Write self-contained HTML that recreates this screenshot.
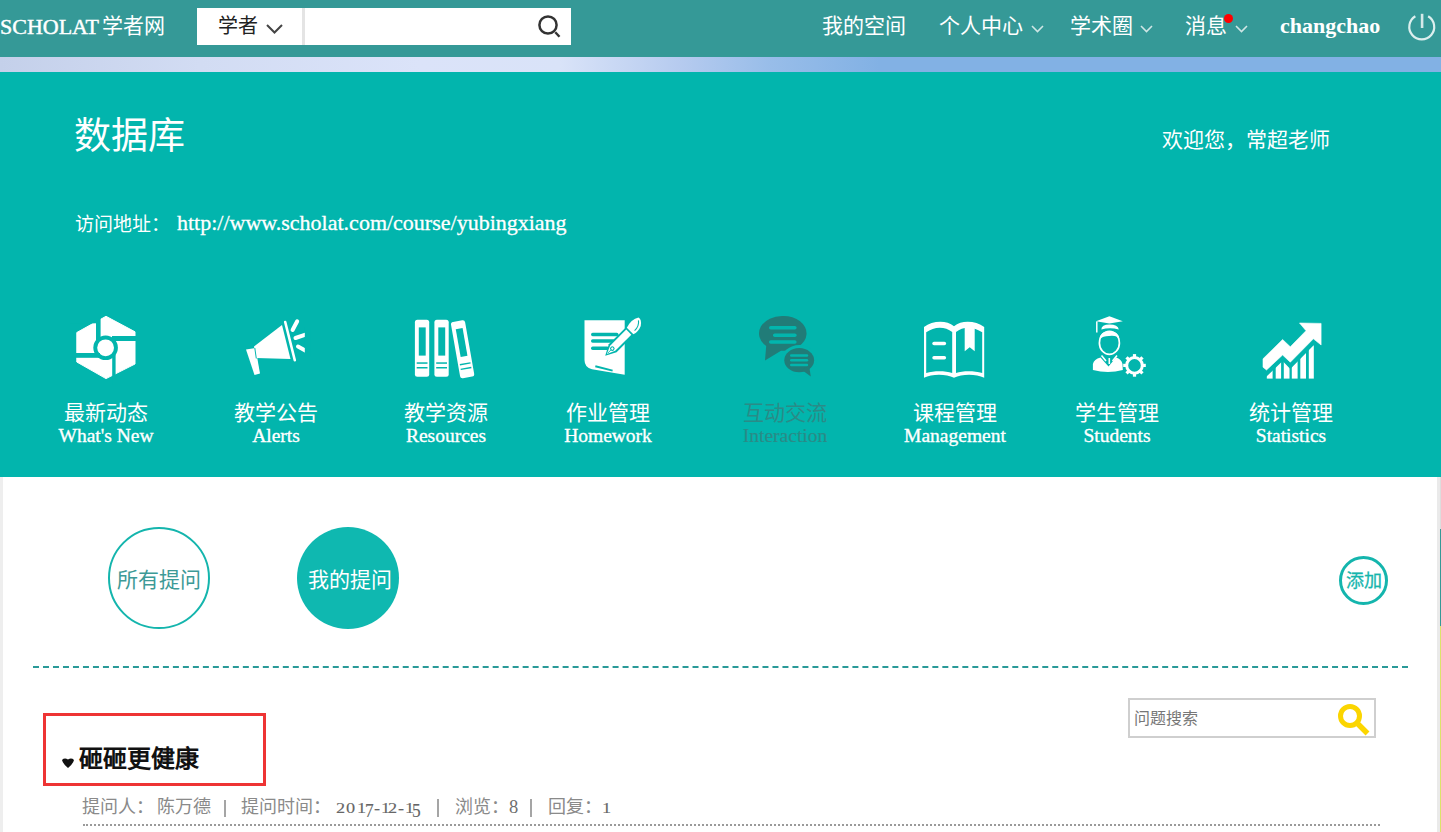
<!DOCTYPE html>
<html lang="zh-CN">
<head>
<meta charset="utf-8">
<style>
*{margin:0;padding:0;box-sizing:border-box}
html,body{width:1441px;height:832px;overflow:hidden;background:#fff;font-family:"Liberation Serif",serif}
.abs{position:absolute}
.nav{position:absolute;left:0;top:0;width:1441px;height:57px;background:#359997}
.strip{position:absolute;left:0;top:57px;width:1441px;height:15px;
background:linear-gradient(to right,#c4d0ea 0px,#d2dcf3 200px,#dbe3f9 420px,#d9e3f8 560px,#b6cbef 680px,#98bde9 770px,#82b1e4 880px,#82b1e4 1441px)}
.hero{position:absolute;left:0;top:72px;width:1441px;height:405px;background:#02b5ad}
.w{color:#fff;white-space:nowrap}
.sans{font-family:"Liberation Sans",sans-serif}
.ni{position:absolute;top:13px;font-family:"Liberation Sans",sans-serif;font-size:21px;line-height:26px;color:#fff;white-space:nowrap}
.lbl{position:absolute;top:401px;width:160px;text-align:center;color:#fff;white-space:nowrap}
.lbl .cn{font-family:"Liberation Sans",sans-serif;font-size:21px;line-height:26px;display:block;margin-top:-1px}
.lbl .en{font-family:"Liberation Serif",serif;font-size:19.5px;line-height:20px;display:block;margin-top:0px;-webkit-text-stroke:0.35px currentColor}
svg{position:absolute;overflow:visible}
.dg{font-family:"Liberation Serif",serif;font-size:15.5px;line-height:20px;color:#666;-webkit-text-stroke:0.1px #666;transform:scaleX(1.18);transform-origin:0 0}
.dg.tl{transform:scale(1.12,1.24)}
</style>
</head>
<body>
<!-- top nav -->
<div class="nav"></div>
<div class="abs w" style="left:0;top:13px;font-size:22px;line-height:28px;-webkit-text-stroke:0.45px #fff">SCHOLAT</div><div class="abs w sans" style="left:102px;top:12px;font-size:21px;line-height:28px">学者网</div>
<div class="abs" style="left:197px;top:8px;width:374px;height:37px;background:#fff"></div>
<div class="abs" style="left:302px;top:8px;width:3px;height:37px;background:#e4e4e4"></div>
<div class="abs sans" style="left:218px;top:14px;font-size:20px;line-height:24px;color:#222">学者</div>
<svg style="left:266px;top:24px" width="17" height="10" viewBox="0 0 17 10"><path d="M1 1 L8.5 8.5 L16 1" fill="none" stroke="#444" stroke-width="2"/></svg>
<svg style="left:537px;top:14px" width="26" height="26" viewBox="0 0 26 26"><circle cx="11" cy="11" r="8.6" fill="none" stroke="#333" stroke-width="2.5"/><path d="M18.3 18.3 L22.5 22.8" stroke="#333" stroke-width="2.4"/></svg>

<div class="ni" style="left:822px">我的空间</div>
<div class="ni" style="left:939px">个人中心</div>
<svg style="left:1031px;top:25px" width="13" height="8" viewBox="0 0 13 8"><path d="M1 1 L6.5 6.5 L12 1" fill="none" stroke="#cfe6e5" stroke-width="1.6"/></svg>
<div class="ni" style="left:1070px">学术圈</div>
<svg style="left:1140px;top:25px" width="13" height="8" viewBox="0 0 13 8"><path d="M1 1 L6.5 6.5 L12 1" fill="none" stroke="#cfe6e5" stroke-width="1.6"/></svg>
<div class="ni" style="left:1185px">消息</div>
<div class="abs" style="left:1224px;top:14px;width:9px;height:9px;border-radius:50%;background:#f00"></div>
<svg style="left:1235px;top:25px" width="13" height="8" viewBox="0 0 13 8"><path d="M1 1 L6.5 6.5 L12 1" fill="none" stroke="#cfe6e5" stroke-width="1.6"/></svg>
<div class="abs w" style="left:1280px;top:12px;font-size:22px;line-height:28px;font-weight:bold">changchao</div>
<svg style="left:1408px;top:12px" width="30" height="30" viewBox="0 0 30 30"><path d="M7.35 4.2 A12.45 12.45 0 1 0 20.15 4.2" fill="none" stroke="#dcefee" stroke-width="2.2"/><path d="M14.1 1.8 L14.1 16" stroke="#d5e9e9" stroke-width="2.6"/></svg>

<div class="strip"></div>

<!-- hero -->
<div class="hero"></div>
<div class="abs w sans" style="left:74px;top:115px;font-size:37px;line-height:44px">数据库</div>
<div class="abs w sans" style="left:1162px;top:127px;font-size:21px;line-height:26px">欢迎您，常超老师</div>
<div class="abs w sans" style="left:75px;top:212px;font-size:19px;line-height:26px;font-weight:350">访问地址：</div><div class="abs w" style="left:177px;top:209px;font-size:22px;line-height:28px;-webkit-text-stroke:0.3px #fff">http://www.scholat.com/course/yubingxiang</div>

<!-- icons -->
<!-- icon1 hexagon (origin 70,310) -->
<svg style="left:70px;top:310px" width="70" height="75" viewBox="0 0 70 75">
<polygon points="36,6.3 65,21.8 65,54 36,68.6 6.8,52 6.8,22.5" fill="#fff" stroke="#fff" stroke-width="1" stroke-linejoin="round"/>
<circle cx="35.6" cy="37.8" r="12.3" fill="#02b5ad"/>
<circle cx="35.6" cy="37.8" r="8.4" fill="#fff"/>
<rect x="26" y="0" width="4.6" height="30" fill="#02b5ad"/>
<rect x="42" y="26" width="30" height="5" fill="#02b5ad"/>
<rect x="42.2" y="45" width="3.4" height="30" fill="#02b5ad"/>
<rect x="0" y="43" width="30" height="4.8" fill="#02b5ad"/>
<rect x="0" y="0" width="27" height="13.3" fill="#02b5ad"/>
<rect x="44" y="66" width="30" height="9" fill="#02b5ad"/>
</svg>
<!-- icon2 megaphone (origin 240,312) -->
<svg style="left:240px;top:312px" width="70" height="70" viewBox="0 0 70 70">
<polygon points="14,34.5 42,13 50.5,47 16,46" fill="#fff"/>
<path d="M45.2 10 L54.8 48.3" stroke="#fff" stroke-width="2.6" stroke-linecap="round"/>
<polygon points="6,37.5 15.5,36 20,61.5 14.5,63" fill="#fff"/>
<path d="M52.6 18 L57.2 9.3" stroke="#fff" stroke-width="4" stroke-linecap="round"/>
<path d="M55.5 26 L67 22.2" stroke="#fff" stroke-width="4" stroke-linecap="round"/>
<path d="M58 34.5 L67 39.5" stroke="#fff" stroke-width="4" stroke-linecap="round"/>
<rect x="64.8" y="15" width="6" height="30" fill="#02b5ad"/>
<path d="M14.8 36 L16.3 46.5" stroke="#02b5ad" stroke-width="1"/>
</svg>
<!-- icon3 books (origin 408,312) -->
<svg style="left:408px;top:311px" width="72" height="72" viewBox="0 0 72 72">
<g id="bk">
<rect x="6.9" y="8.7" width="14.3" height="57.1" rx="2.5" fill="#fff"/>
<rect x="10.8" y="16.4" width="6.9" height="28.2" fill="#02b5ad"/>
<rect x="8.7" y="51.3" width="10.8" height="1.5" fill="#02b5ad"/>
<rect x="8.7" y="56" width="10.8" height="1.5" fill="#02b5ad"/>
</g>
<use href="#bk" x="19.5"/>
<use href="#bk" transform="translate(40.5 1) rotate(-10 14 37)"/>
</svg>
<!-- icon4 homework (origin 578,312) -->
<svg style="left:578px;top:312px" width="72" height="72" viewBox="0 0 72 72">
<path d="M6.5 8.2 L46.7 8.2 L46.7 62.7 L14 57.3 Q6.5 55.5 6.5 48 Z" fill="#fff"/>
<rect x="13" y="20.8" width="27.5" height="3.4" rx="1.7" fill="#02b5ad"/>
<rect x="13" y="27.3" width="24" height="3.4" rx="1.7" fill="#02b5ad"/>
<rect x="13" y="34.6" width="18" height="3.4" rx="1.7" fill="#02b5ad"/>
<path d="M17.3 54.3 L34.6 58.6" stroke="#02b5ad" stroke-width="2"/>
<g transform="translate(28.3 42.6) rotate(-45)">
<path d="M-1.5 0 L9 -5.5 L33 -5.5 L33 5.5 L9 5.5 Z" fill="#02b5ad"/>
<path d="M0.8 0 L9 -3.6 L31.8 -3.6 L31.8 3.6 L9 3.6 Z" fill="#fff"/>
<circle cx="8.5" cy="0" r="1.7" fill="none" stroke="#02b5ad" stroke-width="1.1"/>
<path d="M2 0 L7 0" stroke="#02b5ad" stroke-width="0.8"/>
<path d="M33.5 -4.5 Q43 -7.5 49 -3.5 Q50 0.5 44.5 4.2 Q38.5 6.8 33.5 4.8 Z" fill="#fff"/>
<path d="M37 3 Q43.5 3.2 47 -1.5" fill="none" stroke="#02b5ad" stroke-width="1.1"/>
</g>
</svg>
<!-- icon5 interaction (origin 752,310) -->
<svg style="left:752px;top:310px" width="72" height="72" viewBox="0 0 72 72">
<path fill="#217c78" d="M31.2 6 A23.1 17.4 0 1 1 29 40.7 L13 50.6 L14.2 36 A23.1 17.4 0 0 1 31.2 6 Z"/>
<g fill="#02b5ad">
<rect x="17" y="16" width="27.6" height="3.5" rx="1.7"/>
<rect x="21" y="23.4" width="23.6" height="3.5" rx="1.7"/>
<rect x="17" y="30.3" width="27.6" height="3.5" rx="1.7"/>
<ellipse cx="47.2" cy="50.2" rx="17.9" ry="15.1"/>
</g>
<g fill="#217c78">
<ellipse cx="47.2" cy="50.2" rx="14.9" ry="12.1"/>
<polygon points="50,60 58.8,66.6 57,55"/>
</g>
<g fill="#02b5ad">
<rect x="38" y="44.2" width="18.2" height="2.5" rx="1.2"/>
<rect x="38" y="49" width="18.2" height="2.5" rx="1.2"/>
<rect x="38" y="53.8" width="18.2" height="2.5" rx="1.2"/>
</g>
</svg>
<!-- icon6 open book (origin 918,314) -->
<svg style="left:918px;top:314px" width="72" height="72" viewBox="0 0 72 72">
<path fill="#fff" fill-rule="evenodd" d="M6 13 C14 7 28 5.5 36 12.3 C44 5.5 58 7 66.2 13 L66.2 63.8 C58 59.8 44 59.8 36 63.8 C28 59.8 14 59.8 6 63.8 Z M8.2 18.3 C16 12.3 27 12 34.2 18 L34.2 59 C27 56.5 16 56.5 8.2 59 Z M38 18 C45 12 56 12.3 64.2 18.3 L64.2 59 C56 56.5 45 56.5 38 59 Z"/>
<rect x="14.3" y="27.8" width="13.8" height="3.4" rx="1.7" fill="#fff"/>
<rect x="14.3" y="42" width="13.8" height="3.4" rx="1.7" fill="#fff"/>
<polygon points="46.7,12 56.7,12 56.7,37.2 51.7,33.3 46.7,37.2" fill="#fff"/>
</svg>
<!-- icon7 student (origin 1086,310) -->
<svg style="left:1086px;top:310px" width="72" height="72" viewBox="0 0 72 72">
<polygon points="10,11.2 23.4,6.3 36.8,11.2 23.4,13.5" fill="#fff"/>
<path d="M15.3 19.5 Q15.5 14.5 23.5 14.5 Q32 14.5 32.8 19.5 Q24 17 15.3 19.5 Z" fill="#fff"/>
<path d="M10.8 11.5 L10.8 22.5" stroke="#fff" stroke-width="1.5"/>
<ellipse cx="23.4" cy="32.9" rx="10" ry="11.5" fill="none" stroke="#fff" stroke-width="1.7"/>
<path d="M13.5 29 Q14 21.5 23.4 21.3 Q33 21.5 33.3 29 Q31 25 23 26 Q17 26 13.5 29 Z" fill="#fff"/>
<path d="M6.9 54 Q8 49 14.5 47.5 L22.5 56.5 L30 47.5 Q35.5 49 36.5 54 L36.8 60 Q22 64 6.9 60 Z" fill="#fff"/>
<path d="M15.5 45.5 L20 51 M31 45.5 L26.5 51 M23.3 48 L23.3 54" stroke="#fff" stroke-width="1.6"/>
<g transform="translate(48.5 55.4)">
<circle r="7.8" fill="none" stroke="#fff" stroke-width="3"/>
<g fill="#fff">
<rect x="-1.6" y="-11.3" width="3.2" height="4" transform="rotate(0)"/>
<rect x="-1.6" y="-11.3" width="3.2" height="4" transform="rotate(45)"/>
<rect x="-1.6" y="-11.3" width="3.2" height="4" transform="rotate(90)"/>
<rect x="-1.6" y="-11.3" width="3.2" height="4" transform="rotate(135)"/>
<rect x="-1.6" y="-11.3" width="3.2" height="4" transform="rotate(180)"/>
<rect x="-1.6" y="-11.3" width="3.2" height="4" transform="rotate(225)"/>
<rect x="-1.6" y="-11.3" width="3.2" height="4" transform="rotate(270)"/>
<rect x="-1.6" y="-11.3" width="3.2" height="4" transform="rotate(315)"/>
</g>
</g>
</svg>
<!-- icon8 stats (origin 1230,310) -->
<svg style="left:1230px;top:310px" width="100" height="72" viewBox="0 0 100 72">
<polygon points="33,48.8 52.6,29.5 60.3,36.8 76,20.7 69.5,13 91.1,13.4 91.1,35 83.4,28.8 60.3,52.2 52.6,45 36.5,60 33,57.2" fill="#fff" stroke="#fff" stroke-width="0.6" stroke-linejoin="round"/>
<clipPath id="bc"><polygon points="36.5,66.5 52.6,51 60.3,59 83.4,35.5 84,35.5 84,68.8 30,68.8"/></clipPath>
<g clip-path="url(#bc)" fill="#fff">
<rect x="36.8" y="30" width="5.8" height="38.8"/>
<rect x="45.7" y="30" width="5.4" height="38.8"/>
<rect x="53.8" y="30" width="5.7" height="38.8"/>
<rect x="61.8" y="30" width="5.8" height="38.8"/>
<rect x="70.3" y="30" width="5.7" height="38.8"/>
<rect x="78.8" y="30" width="5" height="38.8"/>
</g>
</svg>


<div class="lbl" style="left:26px"><span class="cn">最新动态</span><span class="en">What's New</span></div>
<div class="lbl" style="left:196px"><span class="cn">教学公告</span><span class="en">Alerts</span></div>
<div class="lbl" style="left:366px"><span class="cn">教学资源</span><span class="en">Resources</span></div>
<div class="lbl" style="left:528px"><span class="cn">作业管理</span><span class="en">Homework</span></div>
<div class="lbl" style="left:705px;color:#2a8b87"><span class="cn" style="font-weight:350">互动交流</span><span class="en" style="-webkit-text-stroke:0.15px currentColor">Interaction</span></div>
<div class="lbl" style="left:875px"><span class="cn">课程管理</span><span class="en">Management</span></div>
<div class="lbl" style="left:1037px"><span class="cn">学生管理</span><span class="en">Students</span></div>
<div class="lbl" style="left:1211px"><span class="cn">统计管理</span><span class="en">Statistics</span></div>

<!-- lower -->
<div class="abs" style="left:0;top:477px;width:3px;height:355px;background:#eee"></div>
<div class="abs" style="left:1437px;top:477px;width:3px;height:355px;background:#eaeaea"></div>
<div class="abs" style="left:1440px;top:477px;width:1px;height:52px;background:#ddd"></div>
<div class="abs" style="left:1440px;top:529px;width:1px;height:97px;background:#359997"></div>
<div class="abs" style="left:1440px;top:626px;width:1px;height:206px;background:#dde36a"></div>

<div class="abs" style="left:108px;top:527px;width:102px;height:102px;border-radius:50%;border:2px solid #14b5ad"></div>
<div class="abs sans" style="left:108px;top:566px;width:102px;text-align:center;font-size:21px;line-height:28px;color:#3d9a97;font-weight:350">所有提问</div>
<div class="abs" style="left:297px;top:527px;width:102px;height:102px;border-radius:50%;background:#0fb8b0"></div>
<div class="abs sans" style="left:297px;top:566px;width:106px;text-align:center;font-size:21px;line-height:28px;color:#fff;font-weight:350">我的提问</div>
<div class="abs" style="left:1339px;top:556px;width:49px;height:49px;border-radius:50%;border:3px solid #14b5ad"></div>
<div class="abs sans" style="left:1339px;top:568px;width:49px;text-align:center;font-size:18px;line-height:26px;color:#14b5ad;-webkit-text-stroke:0.3px #14b5ad">添加</div>

<div class="abs" style="left:33px;top:666px;width:1375px;height:0;border-top:2px dashed #2a9a98"></div>

<div class="abs" style="left:1128px;top:698px;width:248px;height:40px;border:2px solid #cfcfcf;background:#fff"></div>
<div class="abs sans" style="left:1134px;top:707px;font-size:16px;line-height:24px;color:#777;font-weight:350">问题搜索</div>
<svg style="left:1337px;top:703px" width="34" height="34" viewBox="0 0 34 34"><circle cx="13" cy="13" r="9.5" fill="none" stroke="#fbd500" stroke-width="5"/><path d="M20 20 L30.5 30.5" stroke="#fcd600" stroke-width="5.5"/></svg>

<div class="abs" style="left:43px;top:713px;width:223px;height:73px;border:3px solid #ee3434"></div>
<svg style="left:61px;top:757px" width="14" height="12" viewBox="0 0 14 12"><path d="M1 3 Q3.5 0.5 7 2.5 Q10.5 0.5 13 3 Q12 7 7 11 Q2 7 1 3 Z" fill="#111"/></svg>
<div class="abs sans" style="left:79px;top:744px;font-size:24px;line-height:30px;font-weight:bold;color:#111">砸砸更健康</div>

<div class="abs sans" style="left:82px;top:795px;font-size:18px;line-height:24px;color:#8a8a8a;font-weight:350">提问人：</div>
<div class="abs sans" style="left:157px;top:795px;font-size:18px;line-height:24px;color:#8a8a8a;font-weight:350">陈万德</div>
<div class="abs" style="left:224px;top:800px;width:2px;height:17px;background:#a5a5a5"></div>
<div class="abs sans" style="left:241px;top:795px;font-size:18px;line-height:24px;color:#8a8a8a;font-weight:350">提问时间：</div>
<span class="abs dg" style="left:335.6px;top:797.8px">2</span>
<span class="abs dg" style="left:345.7px;top:797.8px">0</span>
<span class="abs dg" style="left:357.2px;top:797.8px">1</span>
<span class="abs dg tl" style="left:365.1px;top:797.8px">7</span>
<span class="abs dg" style="left:373.8px;top:797.8px">-</span>
<span class="abs dg" style="left:380.8px;top:797.8px">1</span>
<span class="abs dg" style="left:388.4px;top:797.8px">2</span>
<span class="abs dg" style="left:397.8px;top:797.8px">-</span>
<span class="abs dg" style="left:405.0px;top:797.8px">1</span>
<span class="abs dg tl" style="left:412.0px;top:797.8px">5</span>
<div class="abs" style="left:437px;top:799px;width:2px;height:18px;background:#a5a5a5"></div>
<div class="abs sans" style="left:455px;top:795px;font-size:18px;line-height:24px;color:#8a8a8a;font-weight:350">浏览：</div>
<div class="abs" style="left:509px;top:795px;font-size:18.5px;line-height:24px;color:#6f6f6f">8</div>
<div class="abs" style="left:530px;top:799px;width:2px;height:18px;background:#a5a5a5"></div>
<div class="abs sans" style="left:548px;top:795px;font-size:18px;line-height:24px;color:#8a8a8a;font-weight:350">回复：</div>
<span class="abs dg" style="left:601.5px;top:797.8px">1</span>
<div class="abs" style="left:83px;top:824px;width:1297px;height:0;border-top:2px dotted #9a9a9a"></div>
</body>
</html>
